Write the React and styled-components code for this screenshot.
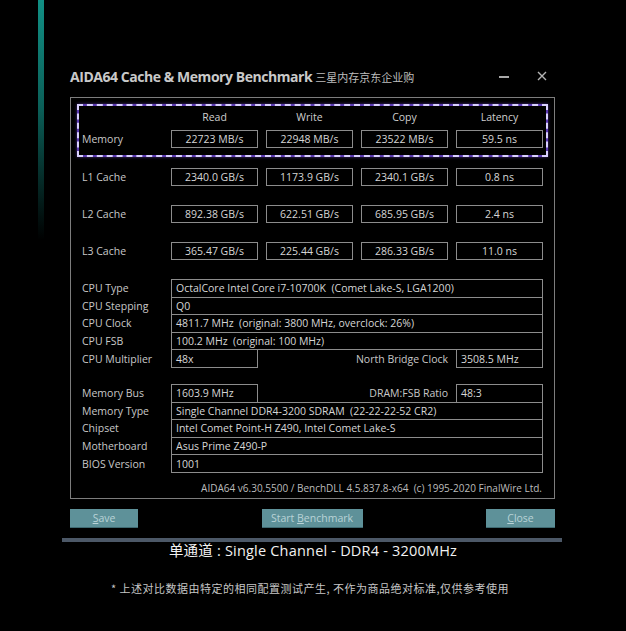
import React from "react";
import styled, { createGlobalStyle } from "styled-components";

const GlobalStyle = createGlobalStyle`
  html, body {
    margin: 0;
    padding: 0;
    background: #000;
  }
`;

const ui = `"Open Sans", "Noto Sans", "Noto Sans CJK SC", sans-serif`;
const cjk = `"Noto Sans CJK SC", "Noto Sans", sans-serif`;

const Page = styled.div`
  position: relative;
  width: 626px;
  height: 631px;
  overflow: hidden;
  background: #000;
  font-family: ${ui};
  color: #cfcfcf;
`;

const AccentBar = styled.div`
  position: absolute;
  left: 38px;
  top: 0;
  width: 6px;
  height: 240px;
  background: linear-gradient(to bottom, #118f84 0%, #0b5f58 45%, #000 100%);
`;

const Window = styled.div`
  position: relative;
  width: 485px;
  margin-left: 70px;
  padding-top: 64px;
`;

const TitleBar = styled.div`
  display: flex;
  align-items: center;
  height: 24px;
  margin-bottom: 9px;
`;

const Title = styled.span`
  font-weight: 700;
  font-size: 14px;
  letter-spacing: -0.45px;
  color: #c9c9c9;
`;

const TitleNote = styled.span`
  font-family: ${cjk};
  font-size: 11px;
  color: #bdbdbd;
  margin-left: 3px;
  margin-top: 2px;
`;

const Controls = styled.div`
  margin-left: auto;
  display: flex;
  align-items: center;
  gap: 28px;
  padding-right: 8px;
`;

const Minimize = styled.span`
  display: block;
  width: 10px;
  height: 1.5px;
  margin-top: 2px;
  background: #a9a9a9;
`;

const Panel = styled.div`
  border: 1px solid #7d7d7d;
  padding: 6px 6px 0;
`;

const Highlight = styled.div`
  border: 2px dashed #d9d0ff;
  background: linear-gradient(#000, #000) padding-box, #5b39b3 border-box;
  padding: 0 3px 7px;
  box-shadow: 0 0 3px rgba(120, 80, 220, 0.55);
`;

const Grid = styled.div`
  display: grid;
  grid-template-columns: 81px repeat(4, 87px);
  column-gap: 8px;
  align-items: center;
`;

const HeaderRow = styled(Grid)`
  height: 22px;
  margin-bottom: 2px;
`;

const ColHead = styled.div`
  text-align: center;
  font-size: 10.5px;
  color: #cfcfcf;
`;

const CacheRow = styled(Grid)`
  padding: 0 ${(p) => (p.$inset ? 0 : 5)}px;
  margin-top: ${(p) => p.$gap || 0}px;
`;

const Label = styled.div`
  font-size: 10.5px;
  color: #c8c8c8;
  white-space: nowrap;
  text-align: ${(p) => (p.$right ? "right" : "left")};
  padding-right: ${(p) => (p.$right ? 8 : 0)}px;
`;

const ValueBox = styled.div`
  box-sizing: border-box;
  height: ${(p) => (p.$center ? 18 : 18.6)}px;
  border: 1px solid #8c8c8c;
  display: flex;
  align-items: center;
  justify-content: ${(p) => (p.$center ? "center" : "flex-start")};
  padding: 0 4px;
  font-size: 10.5px;
  color: #d6d6d6;
  white-space: nowrap;
  overflow: hidden;
`;

const InfoGroup = styled.div`
  padding: 0 5px;
  margin-top: ${(p) => p.$gap}px;
`;

const InfoRow = styled.div`
  display: grid;
  grid-template-columns: ${(p) =>
    p.$split ? "89px 87px 1fr 87px" : "89px 1fr"};
  align-items: center;
  & + & {
    margin-top: -1px;
  }
`;

const Credits = styled.div`
  text-align: right;
  font-size: 10px;
  color: #bdbdbd;
  padding: 9px 6px 3px 0;
  line-height: 13px;
`;

const ButtonRow = styled.div`
  display: flex;
  justify-content: space-between;
  margin-top: 10px;
`;

const Button = styled.div`
  box-sizing: border-box;
  width: ${(p) => p.$w}px;
  height: 19px;
  background: #5e9199;
  border-bottom: 1px solid #3f6a72;
  display: flex;
  align-items: center;
  justify-content: center;
  font-size: 10.5px;
  color: #b9d3d7;
  u {
    text-decoration: underline;
    text-underline-offset: 1px;
  }
`;

const Divider = styled.div`
  width: 500px;
  height: 4px;
  margin: 10px 0 0 62px;
  background: #4c5867;
`;

const Caption = styled.div`
  text-align: center;
  font-family: "Open Sans", "Noto Sans CJK SC", sans-serif;
  font-size: 14.5px;
  line-height: 18px;
  color: #f2f2f2;
  letter-spacing: 0.2px;
`;

const Note = styled.div`
  text-align: center;
  font-family: ${cjk};
  font-size: 11px;
  line-height: 14px;
  color: #c6c6c6;
  margin-top: 21px;
  padding-right: 6px;
  letter-spacing: 0.5px;
`;

const CloseIcon = () => (
  <svg width="10" height="10" viewBox="0 0 10 10">
    <path d="M1 1 L9 9 M9 1 L1 9" stroke="#b4b4b4" strokeWidth="1.4" />
  </svg>
);

const cacheRows = [
  ["L1 Cache", "2340.0 GB/s", "1173.9 GB/s", "2340.1 GB/s", "0.8 ns"],
  ["L2 Cache", "892.38 GB/s", "622.51 GB/s", "685.95 GB/s", "2.4 ns"],
  ["L3 Cache", "365.47 GB/s", "225.44 GB/s", "286.33 GB/s", "11.0 ns"],
];

const Cells = ({ values }) =>
  values.map((v) => (
    <ValueBox key={v} $center>
      {v}
    </ValueBox>
  ));

export default function App() {
  return (
    <Page>
      <GlobalStyle />
      <AccentBar />
      <Window>
        <TitleBar>
          <Title>AIDA64 Cache &amp; Memory Benchmark</Title>
          <TitleNote>三星内存京东企业购</TitleNote>
          <Controls>
            <Minimize />
            <CloseIcon />
          </Controls>
        </TitleBar>

        <Panel>
          <Highlight>
            <HeaderRow>
              <span />
              <ColHead>Read</ColHead>
              <ColHead>Write</ColHead>
              <ColHead>Copy</ColHead>
              <ColHead>Latency</ColHead>
            </HeaderRow>
            <CacheRow $inset>
              <Label>Memory</Label>
              <Cells values={["22723 MB/s", "22948 MB/s", "23522 MB/s", "59.5 ns"]} />
            </CacheRow>
          </Highlight>

          {cacheRows.map(([label, ...vals], i) => (
            <CacheRow key={label} $gap={i === 0 ? 11 : 19}>
              <Label>{label}</Label>
              <Cells values={vals} />
            </CacheRow>
          ))}

          <InfoGroup $gap={19}>
            <InfoRow>
              <Label>CPU Type</Label>
              <ValueBox>OctalCore Intel Core i7-10700K&nbsp; (Comet Lake-S, LGA1200)</ValueBox>
            </InfoRow>
            <InfoRow>
              <Label>CPU Stepping</Label>
              <ValueBox>Q0</ValueBox>
            </InfoRow>
            <InfoRow>
              <Label>CPU Clock</Label>
              <ValueBox>4811.7 MHz&nbsp; (original: 3800 MHz, overclock: 26%)</ValueBox>
            </InfoRow>
            <InfoRow>
              <Label>CPU FSB</Label>
              <ValueBox>100.2 MHz&nbsp; (original: 100 MHz)</ValueBox>
            </InfoRow>
            <InfoRow $split>
              <Label>CPU Multiplier</Label>
              <ValueBox>48x</ValueBox>
              <Label $right>North Bridge Clock</Label>
              <ValueBox>3508.5 MHz</ValueBox>
            </InfoRow>
          </InfoGroup>

          <InfoGroup $gap={16}>
            <InfoRow $split>
              <Label>Memory Bus</Label>
              <ValueBox>1603.9 MHz</ValueBox>
              <Label $right>DRAM:FSB Ratio</Label>
              <ValueBox>48:3</ValueBox>
            </InfoRow>
            <InfoRow>
              <Label>Memory Type</Label>
              <ValueBox>Single Channel DDR4-3200 SDRAM&nbsp; (22-22-22-52 CR2)</ValueBox>
            </InfoRow>
            <InfoRow>
              <Label>Chipset</Label>
              <ValueBox>Intel Comet Point-H Z490, Intel Comet Lake-S</ValueBox>
            </InfoRow>
            <InfoRow>
              <Label>Motherboard</Label>
              <ValueBox>Asus Prime Z490-P</ValueBox>
            </InfoRow>
            <InfoRow>
              <Label>BIOS Version</Label>
              <ValueBox>1001</ValueBox>
            </InfoRow>
          </InfoGroup>

          <Credits>
            AIDA64 v6.30.5500 / BenchDLL 4.5.837.8-x64&nbsp; (c) 1995-2020 FinalWire Ltd.
          </Credits>
        </Panel>

        <ButtonRow>
          <Button $w={68}>
            <u>S</u>ave
          </Button>
          <Button $w={101}>
            Start&nbsp;<u>B</u>enchmark
          </Button>
          <Button $w={69}>
            <u>C</u>lose
          </Button>
        </ButtonRow>
      </Window>

      <Divider />
      <Caption>单通道 : Single Channel - DDR4 - 3200MHz</Caption>
      <Note>* 上述对比数据由特定的相同配置测试产生, 不作为商品绝对标准,仅供参考使用</Note>
    </Page>
  );
}
